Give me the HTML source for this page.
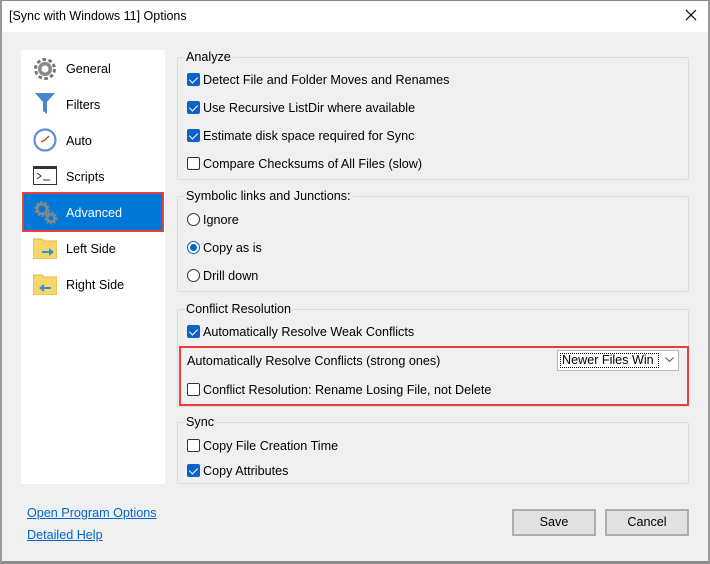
<!DOCTYPE html>
<html><head><meta charset="utf-8"><style>
*{box-sizing:border-box;margin:0;padding:0}
body{width:710px;height:564px;background:#f0f0f0;font-family:"Liberation Sans",sans-serif;font-size:12.6px;color:#000;position:relative;overflow:hidden}
.a{position:absolute;white-space:nowrap}
.frame{position:absolute;left:0;top:0;width:710px;height:564px;border:1px solid #8a8a8a;border-left:2px solid #999;border-bottom:3px solid #8a8a8a;border-right:2px solid #999}
.title{position:absolute;left:2px;top:1px;width:706px;height:31px;background:#fff}
.side{position:absolute;left:21px;top:50px;width:144px;height:434px;background:#fff}
.grp{position:absolute;border:1px solid #dcdcdc;border-radius:2px}
.gt{position:absolute;background:#f0f0f0;padding:0 2px;top:-8px;left:6px;line-height:14px}
.cb{position:absolute;width:13px;height:13px;border:1px solid #333;border-radius:2px;background:#fff}
.cb.on{background:#0a64c8;border-color:#0a64c8}
.cb.on:after{content:"";position:absolute;left:3px;top:1px;width:4px;height:7px;border:solid #fff;border-width:0 1.5px 1.5px 0;transform:rotate(45deg)}
.rb{position:absolute;width:13px;height:13px;border:1px solid #333;border-radius:50%;background:#fff}
.rb.on{border-color:#0a64c8}
.rb.on:after{content:"";position:absolute;left:2px;top:2px;width:7px;height:7px;border-radius:50%;background:#0a64c8}
.btn{position:absolute;width:84px;height:27px;border:2px solid #adadad;background:#e1e1e1;text-align:center;line-height:23px}
.lnk{color:#0066cc;text-decoration:underline}
</style></head><body>
<div class="title"></div>
<div class="a" style="left:9px;top:9px;font-size:12.5px">[Sync with Windows 11] Options</div>
<svg class="a" style="left:685px;top:9px" width="12" height="12"><path d="M1 1L11 11M11 1L1 11" stroke="#000" stroke-width="1.2"/></svg>

<div class="side"></div>
<svg class="a" style="left:33px;top:57px" width="24" height="24" viewBox="0 0 24 24"><circle cx="12" cy="12" r="9.5" fill="none" stroke="#777" stroke-width="3" stroke-dasharray="3.5 2.5"/><circle cx="12" cy="12" r="7" fill="#888"/><circle cx="12" cy="12" r="3.5" fill="#fff"/></svg>
<div class="a" style="left:66px;top:62px">General</div>
<svg class="a" style="left:35px;top:93px" width="20" height="22"><path d="M0 0H20L12 9V21L8 18V9Z" fill="#4a86d0"/></svg>
<div class="a" style="left:66px;top:98px">Filters</div>
<svg class="a" style="left:33px;top:128px" width="24" height="24"><circle cx="12" cy="12" r="10.5" fill="#fff" stroke="#5b8fd6" stroke-width="2.2"/><path d="M12 12L16 8M12 12L8 14" stroke="#c04020" stroke-width="1.3" fill="none"/></svg>
<div class="a" style="left:66px;top:134px">Auto</div>
<svg class="a" style="left:33px;top:166px" width="24" height="20"><rect x=".5" y=".5" width="23" height="18" fill="#fff" stroke="#333"/><rect x="1" y="1" width="22" height="2" fill="#333"/><path d="M4 7L8 10L4 13M10 14H17" stroke="#333" fill="none"/></svg>
<div class="a" style="left:66px;top:170px">Scripts</div>
<div class="a" style="left:22px;top:192px;width:142px;height:40px;background:#0078d7;border:2px solid #e84040"></div>
<svg class="a" style="left:33px;top:200px" width="26" height="26"><circle cx="9" cy="9" r="6.5" fill="none" stroke="#888" stroke-width="2.5" stroke-dasharray="2.3 1.8"/><circle cx="9" cy="9" r="4.8" fill="none" stroke="#888" stroke-width="2.5"/><circle cx="18" cy="18" r="5.3" fill="none" stroke="#888" stroke-width="2.5" stroke-dasharray="2 1.6"/><circle cx="18" cy="18" r="3.6" fill="none" stroke="#888" stroke-width="2.3"/></svg>
<div class="a" style="left:66px;top:206px;color:#fff">Advanced</div>
<svg class="a" style="left:33px;top:237px" width="24" height="22"><path d="M0 2H9L11 4H24V22H0Z" fill="#f7d66a" stroke="#e0b840"/><path d="M9 14H16V11L21 15L16 19V16H9Z" fill="#2f8fe0"/></svg>
<div class="a" style="left:66px;top:242px">Left Side</div>
<svg class="a" style="left:33px;top:273px" width="24" height="22"><path d="M0 2H9L11 4H24V22H0Z" fill="#f7d66a" stroke="#e0b840"/><path d="M18 14H11V11L6 15L11 19V16H18Z" fill="#2f8fe0"/></svg>
<div class="a" style="left:66px;top:278px">Right Side</div>

<div class="grp" style="left:177px;top:57px;width:512px;height:123px"><div class="gt">Analyze</div></div>
<div class="cb on" style="left:187px;top:73px"></div><div class="a" style="left:203px;top:73px">Detect File and Folder Moves and Renames</div>
<div class="cb on" style="left:187px;top:101px"></div><div class="a" style="left:203px;top:101px">Use Recursive ListDir where available</div>
<div class="cb on" style="left:187px;top:129px"></div><div class="a" style="left:203px;top:129px">Estimate disk space required for Sync</div>
<div class="cb" style="left:187px;top:157px"></div><div class="a" style="left:203px;top:157px">Compare Checksums of All Files (slow)</div>

<div class="grp" style="left:177px;top:196px;width:512px;height:96px"><div class="gt">Symbolic links and Junctions:</div></div>
<div class="rb" style="left:187px;top:213px"></div><div class="a" style="left:203px;top:213px">Ignore</div>
<div class="rb on" style="left:187px;top:241px"></div><div class="a" style="left:203px;top:241px">Copy as is</div>
<div class="rb" style="left:187px;top:269px"></div><div class="a" style="left:203px;top:269px">Drill down</div>

<div class="grp" style="left:177px;top:309px;width:512px;height:98px"><div class="gt">Conflict Resolution</div></div>
<div class="cb on" style="left:187px;top:325px"></div><div class="a" style="left:203px;top:325px">Automatically Resolve Weak Conflicts</div>
<div class="a" style="left:179px;top:346px;width:510px;height:60px;border:2px solid #e84040"></div>
<div class="a" style="left:187px;top:354px">Automatically Resolve Conflicts (strong ones)</div>
<div class="a" style="left:557px;top:350px;width:122px;height:21px;background:#fff;border:1px solid #bbb"></div>
<div class="a" style="left:560px;top:353px;width:99px;height:15px;border:1px dotted #000;line-height:13px;padding-left:1px">Newer Files Win</div>
<svg class="a" style="left:665px;top:357px" width="9" height="6"><path d="M.5 .5L4.5 4.5L8.5 .5" stroke="#555" fill="none"/></svg>
<div class="cb" style="left:187px;top:383px"></div><div class="a" style="left:203px;top:383px">Conflict Resolution: Rename Losing File, not Delete</div>

<div class="grp" style="left:177px;top:422px;width:512px;height:62px"><div class="gt">Sync</div></div>
<div class="cb" style="left:187px;top:439px"></div><div class="a" style="left:203px;top:439px">Copy File Creation Time</div>
<div class="cb on" style="left:187px;top:464px"></div><div class="a" style="left:203px;top:464px">Copy Attributes</div>

<div class="a lnk" style="left:27px;top:506px">Open Program Options</div>
<div class="a lnk" style="left:27px;top:528px">Detailed Help</div>
<div class="btn" style="left:512px;top:509px">Save</div>
<div class="btn" style="left:605px;top:509px">Cancel</div>
<div class="frame"></div>
</body></html>
